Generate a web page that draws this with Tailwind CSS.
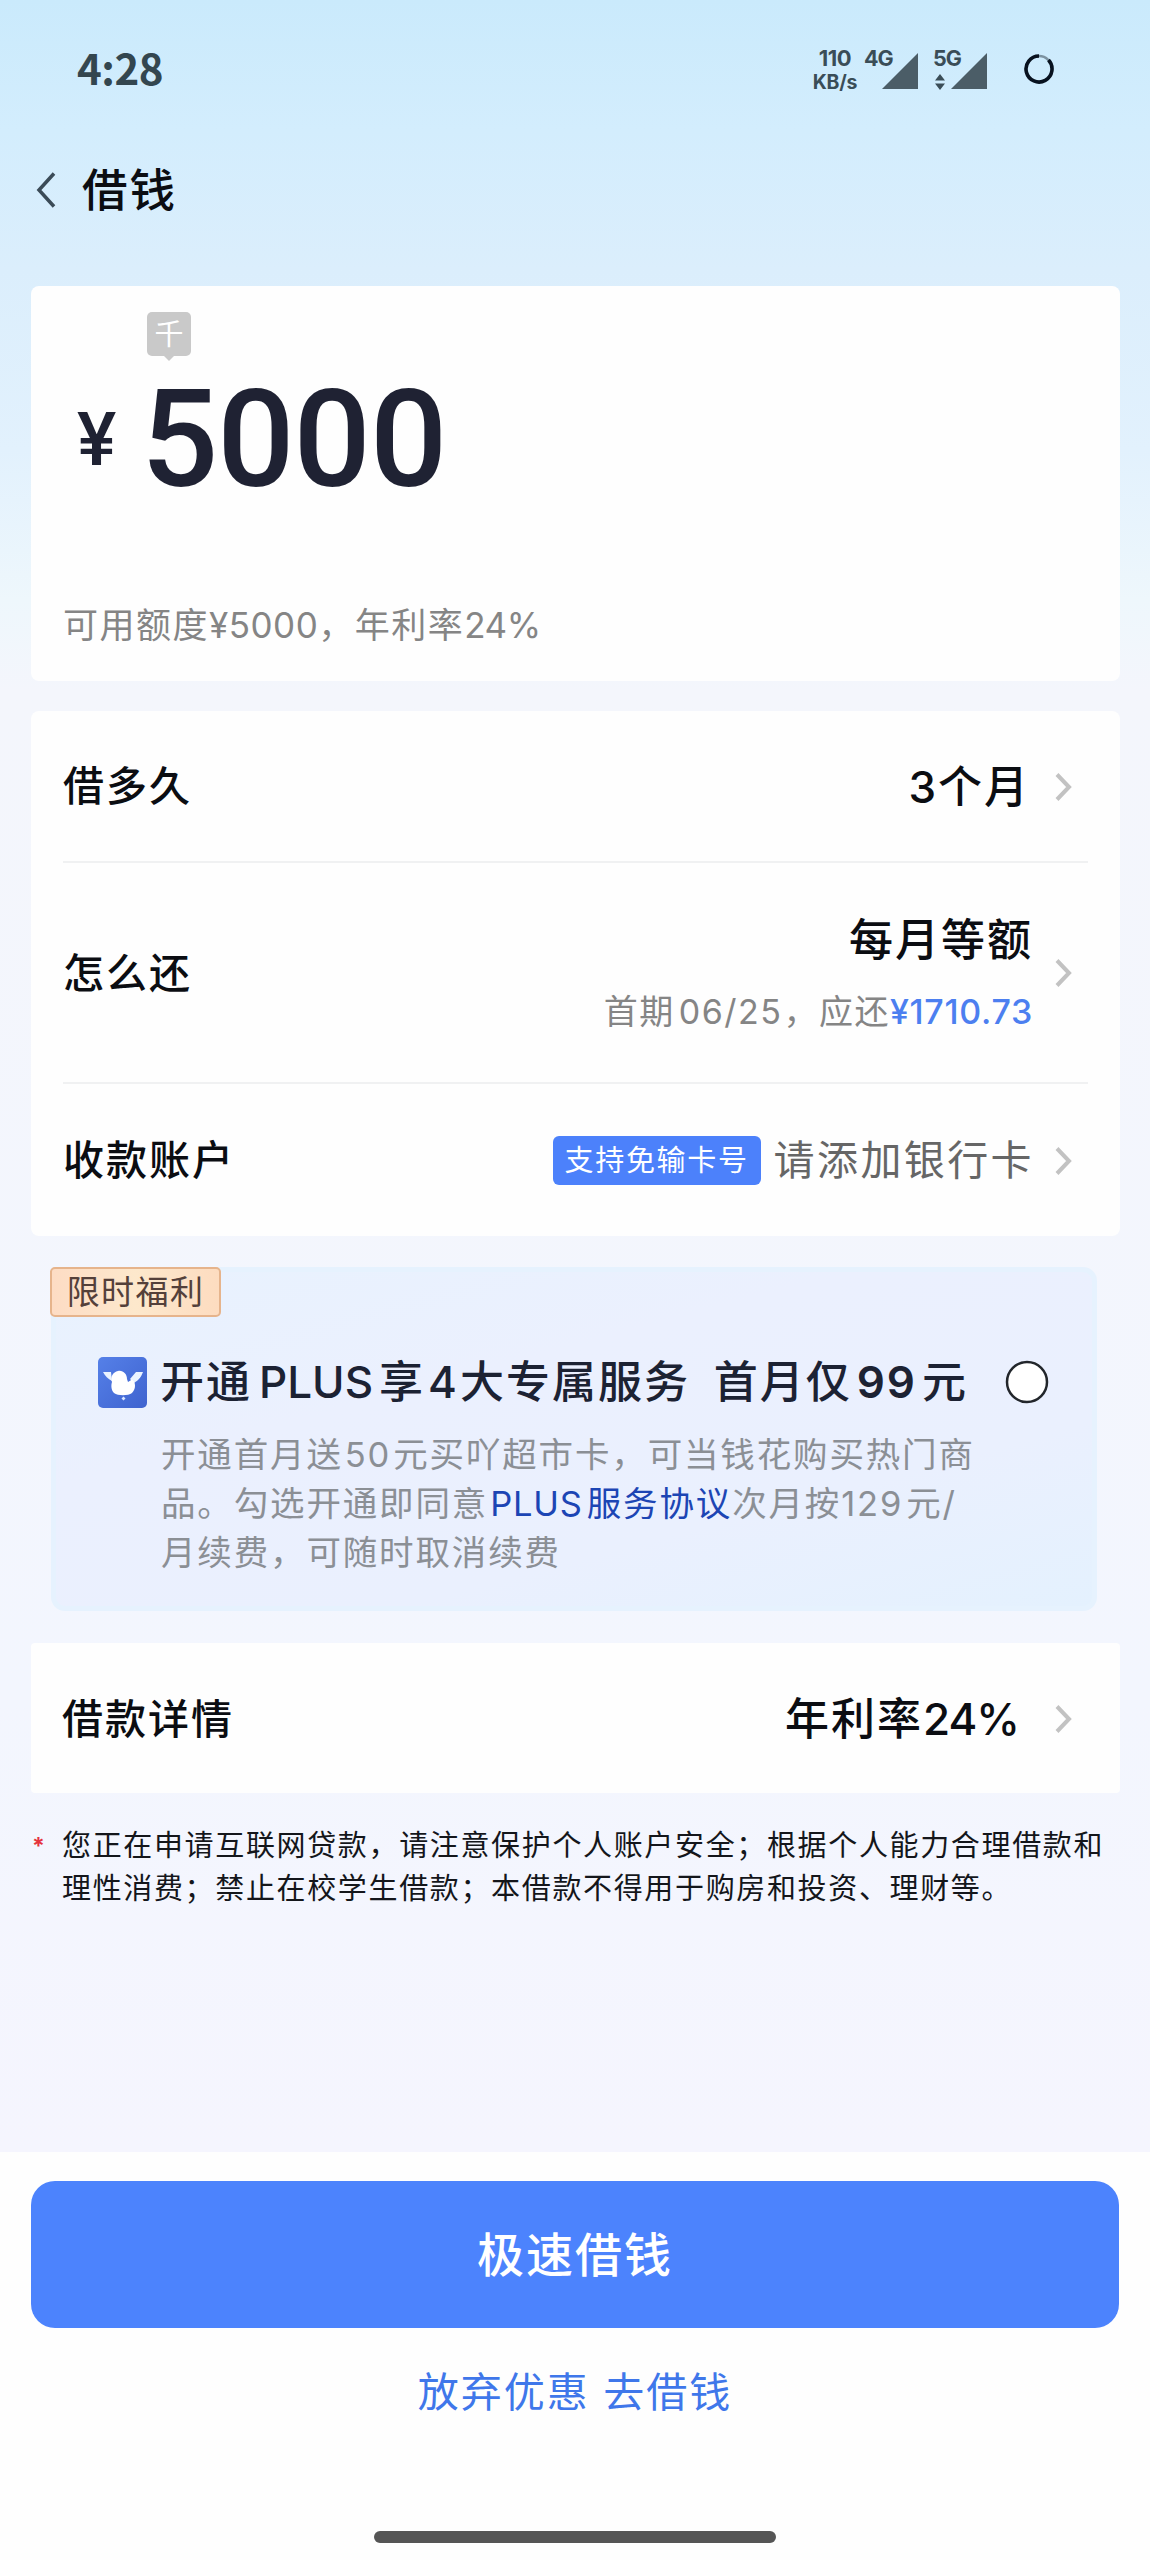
<!DOCTYPE html>
<html lang="zh-CN">
<head>
<meta charset="utf-8">
<title>借钱</title>
<script src="https://cdn.jsdelivr.net/npm/@tailwindcss/browser@4"></script>
</head>
<body class="bg-[#f4f6fd]">
<div class="flex h-[2560px] w-[1150px] flex-col overflow-hidden bg-[#f4f6fd] bg-[linear-gradient(180deg,#caeafc_0px,#d3edfd_130px,#dbeefc_270px,#e2f1fd_450px,#eef7fc_600px,#f4f6fc_690px,#f3f6fe_1700px,#f5f5fe_2150px)] font-['Inter','Noto_Sans_CJK_SC',sans-serif] text-[#0b0d12]">

  <!-- status bar -->
  <div class="flex h-[138px] items-center pr-[95px] pl-[77px]">
    <span class="-mt-[5px] font-['Noto_Sans_CJK_SC',sans-serif] text-[42px] leading-none font-bold tracking-[-0.5px] text-[#33464f]">4:28</span>
    <div class="ml-auto flex h-[39px] text-[#3a4d57]">
      <div class="mr-[6px] flex w-[46px] flex-col items-center text-[22px] leading-[16px] font-bold">
        <span class="tracking-[-0.5px]">110</span>
        <span class="mt-[8px] text-[19.500px] tracking-[-0.2px]">KB/s</span>
      </div>
      <div class="relative w-[54px]">
        <span class="block text-[21.500px] leading-[16px] font-bold tracking-[-1px]">4G</span>
        <svg class="absolute top-[3px] left-[18px]" width="36" height="36" viewBox="0 0 36 36"><path d="M36 0V36H0Z" fill="#4b5d67"/></svg>
      </div>
      <div class="relative ml-[15px] w-[54px]">
        <span class="block text-[21.500px] leading-[16px] font-bold tracking-[-1px]">5G</span>
        <svg class="absolute top-[24px] left-[2px]" width="10" height="16" viewBox="0 0 10 16"><path d="M5 0L10 6.500H0ZM5 16L10 9.500H0Z" fill="#3a4d57"/></svg>
        <svg class="absolute top-[3px] left-[18px]" width="36" height="36" viewBox="0 0 36 36"><path d="M36 0V36H0Z" fill="#4b5d67"/></svg>
      </div>
      <svg class="mt-[3px] ml-[36px]" width="32" height="32" viewBox="0 0 32 32" fill="none" stroke-width="3.600"><circle cx="16" cy="16" r="13" stroke="#7c92a0" stroke-width="2.400"/><path d="M25.500 7.100A13 13 0 1 1 16 3" stroke="#08121f"/></svg>
    </div>
  </div>

  <!-- navigation -->
  <div class="flex h-[104px] items-center pl-[35px]">
    <svg width="22" height="40" viewBox="0 0 22 40" fill="none" stroke="#3b4b57" stroke-width="3.500"><path d="M19 3.500L4 20L19 36.500"/></svg>
    <h1 class="mt-[1px] ml-[25px] text-[45.500px] leading-none font-medium tracking-[2px]">借钱</h1>
  </div>

  <main class="mt-[44px] flex flex-col px-[31px]">
    <!-- amount -->
    <section class="flex h-[395px] w-[1089px] flex-col rounded-[8px] bg-[#fefefe] pt-[26px]">
      <div class="relative ml-[116px] flex h-[44px] w-[44px] items-center justify-center rounded-[5px] bg-[#c9c9c9] text-[29px] leading-none text-white">千
        <svg class="absolute top-[43px] left-[16px]" width="12" height="6" viewBox="0 0 12 6"><path d="M0 0H12L6 6Z" fill="#c9c9c9"/></svg>
      </div>
      <div class="mt-[19px] flex h-[130px] items-center font-['Roboto',sans-serif] font-medium text-[#1f2233]">
        <span class="ml-[46px] w-[64px] text-[74px] leading-none">¥</span>
        <span class="text-[136px] leading-none tracking-[-1px]">5000</span>
      </div>
      <p class="mt-[100px] ml-[32px] text-[35px] leading-[40px] tracking-[1.500px] text-[#858585]">可用额度<span class="tracking-[0.500px]">¥5000</span>，年利率<span class="tracking-[-0.500px]">24%</span></p>
    </section>

    <!-- loan terms -->
    <section class="mt-[30px] flex w-[1089px] flex-col rounded-[8px] bg-[#fefefe] px-[32px]">
      <div class="flex h-[152px] items-center border-b-2 border-[#f0f1f2] pt-[1px] pr-[15px] text-[41px] leading-none font-medium tracking-[2px]">
        <span>借多久</span>
        <span class="ml-auto text-[44px]">3个月</span>
        <svg class="ml-[23px]" width="20" height="30" viewBox="0 0 20 30" fill="none" stroke="#c2c2c2" stroke-width="4"><path d="M4 2.500L16 15L4 27.500"/></svg>
      </div>
      <div class="flex h-[221px] items-center border-b-2 border-[#f0f1f2] pt-[1px] pr-[15px] text-[41px] leading-none font-medium tracking-[2px]">
        <span>怎么还</span>
        <div class="ml-auto flex flex-col items-end pt-[5px] leading-[72px]">
          <span class="text-[44px]">每月等额</span>
          <span class="text-[34px] font-normal tracking-[1.500px] text-[#858585]">首期<span class="mr-[1px] ml-[4px]">06/25</span>，应还<span class="font-medium tracking-[0.700px] text-[#4c7ff0]">¥1710.73</span></span>
        </div>
        <svg class="ml-[20px]" width="20" height="30" viewBox="0 0 20 30" fill="none" stroke="#c2c2c2" stroke-width="4"><path d="M4 2.500L16 15L4 27.500"/></svg>
      </div>
      <div class="flex h-[152px] items-center pt-[1px] pr-[15px] text-[41px] leading-none font-medium tracking-[2px]">
        <span>收款账户</span>
        <span class="ml-auto flex h-[49px] w-[208px] items-center justify-center rounded-[6px] bg-[#4c81fb] text-[29px] font-normal tracking-[1.700px] text-white">支持免输卡号</span>
        <span class="ml-[13px] font-normal tracking-[2.400px] text-[#666]">请添加银行卡</span>
        <svg class="ml-[19px]" width="20" height="30" viewBox="0 0 20 30" fill="none" stroke="#c2c2c2" stroke-width="4"><path d="M4 2.500L16 15L4 27.500"/></svg>
      </div>
    </section>

    <!-- PLUS offer -->
    <section class="relative mt-[31px] ml-[20px] flex h-[344px] w-[1046px] flex-col rounded-[14px] border-[5px] border-[#e6f2fe] bg-[#eaf0fe] bg-[linear-gradient(165deg,#e8f2fe_0%,#ebf0fe_35%,#eaf0fe_70%,#e4f1fe_100%)] pt-[82px]">
      <span class="absolute top-[-5px] left-[-6px] flex h-[50px] w-[171px] items-center justify-center rounded-[5px] border-2 border-[#e6b48c] bg-[linear-gradient(90deg,#fddcc4,#fde8cc_50%,#fddcc0)] text-[33px] leading-none tracking-[1.400px] text-[#54403a]">限时福利</span>
      <div class="flex h-[56px] items-center pr-[43px] pl-[42px]">
        <svg width="49" height="51" viewBox="0 0 49 51"><defs><linearGradient id="plus" x1="0" y1="0" x2="1" y2="1"><stop offset="0" stop-color="#5580e8"/><stop offset="1" stop-color="#3f63cf"/></linearGradient></defs><rect width="49" height="51" rx="5" fill="url(#plus)"/><path d="M5 15H13L14 24C10 22 7 19 5 15ZM45 15H38L32 22L36 26C41 23 43 20 45 15Z" fill="#eaf3ff"/><path d="M20 14C25 13 29 17 29 22L30 25L34 22.500C38 25 38 32 34 36C30 39 20 39 16 36C13 33 13 28 14 25C12 20 15 15 20 14Z" fill="#fff"/><path d="M25.500 39.500L27.500 41.500L25.500 43.500L23.500 41.500Z" fill="#dce8ff"/></svg>
        <span class="ml-[13px] text-[44px] leading-none font-medium tracking-[2px] whitespace-nowrap text-[#1c2233]">开通<span class="mr-[6px] ml-[7px] tracking-[0px]">PLUS</span>享<span class="mx-[3px] tracking-[0px]">4</span>大专属服务</span>
        <span class="mr-[37px] ml-auto flex items-center text-[44px] leading-none font-medium tracking-[2px] text-[#1c2233]">首月仅<span class="mx-[5px] font-semibold">99</span>元</span>
        <svg width="44" height="44" viewBox="0 0 44 44"><circle cx="22" cy="22" r="20" fill="#fff" stroke="#22262b" stroke-width="2.500"/></svg>
      </div>
      <p class="mt-[20px] ml-[105px] text-[34.500px] leading-[49px] tracking-[1.850px] text-[#8b8f95]">开通首月送<span class="mx-[2px]">50</span>元买吖超市卡，可当钱花购买热门商<br>品。勾选开通即同意<span class="text-[#1c45b4]"><span class="mr-[4px] ml-[2px] tracking-[0.800px]">PLUS</span>服务协议</span>次月按<span class="mr-[3px]">129</span>元/<br>月续费，可随时取消续费</p>
    </section>

    <!-- loan details -->
    <section class="mt-[32px] flex h-[150px] w-[1089px] items-center rounded-[4px] bg-[#fefefe] pt-[2px] pr-[47px] pl-[31px] text-[41px] leading-none font-medium tracking-[2px]">
      <span>借款详情</span>
      <span class="ml-auto text-[44px]">年利率<span class="tracking-[-1px]">24%</span></span>
      <svg class="ml-[34px]" width="20" height="30" viewBox="0 0 20 30" fill="none" stroke="#c2c2c2" stroke-width="4"><path d="M4 2.500L16 15L4 27.500"/></svg>
    </section>

    <div class="mt-[32px] flex text-[29px] leading-[42.500px] tracking-[1.650px] text-[#14161b]">
      <span class="w-[31px] pl-[1px] text-[23px] font-bold text-[#e5333d]">*</span>
      <p class="whitespace-nowrap">您正在申请互联网贷款，请注意保护个人账户安全；根据个人能力合理借款和<br>理性消费；禁止在校学生借款；本借款不得用于购房和投资、理财等。</p>
    </div>
  </main>

  <!-- actions -->
  <footer class="mt-auto flex h-[408px] flex-col items-center bg-[#fefefe] pt-[29px]">
    <button class="h-[147px] w-[1088px] rounded-[24px] bg-[#4c83fd] text-[47px] leading-none font-medium tracking-[2px] text-white">极速借钱</button>
    <a class="mt-[34px] text-[41px] leading-[60px] tracking-[2px] text-[#3f77ea]">放弃优惠 去借钱</a>
    <div class="mt-auto mb-[17px] h-[12px] w-[402px] rounded-full bg-[#555]"></div>
  </footer>
</div>
</body>
</html>
